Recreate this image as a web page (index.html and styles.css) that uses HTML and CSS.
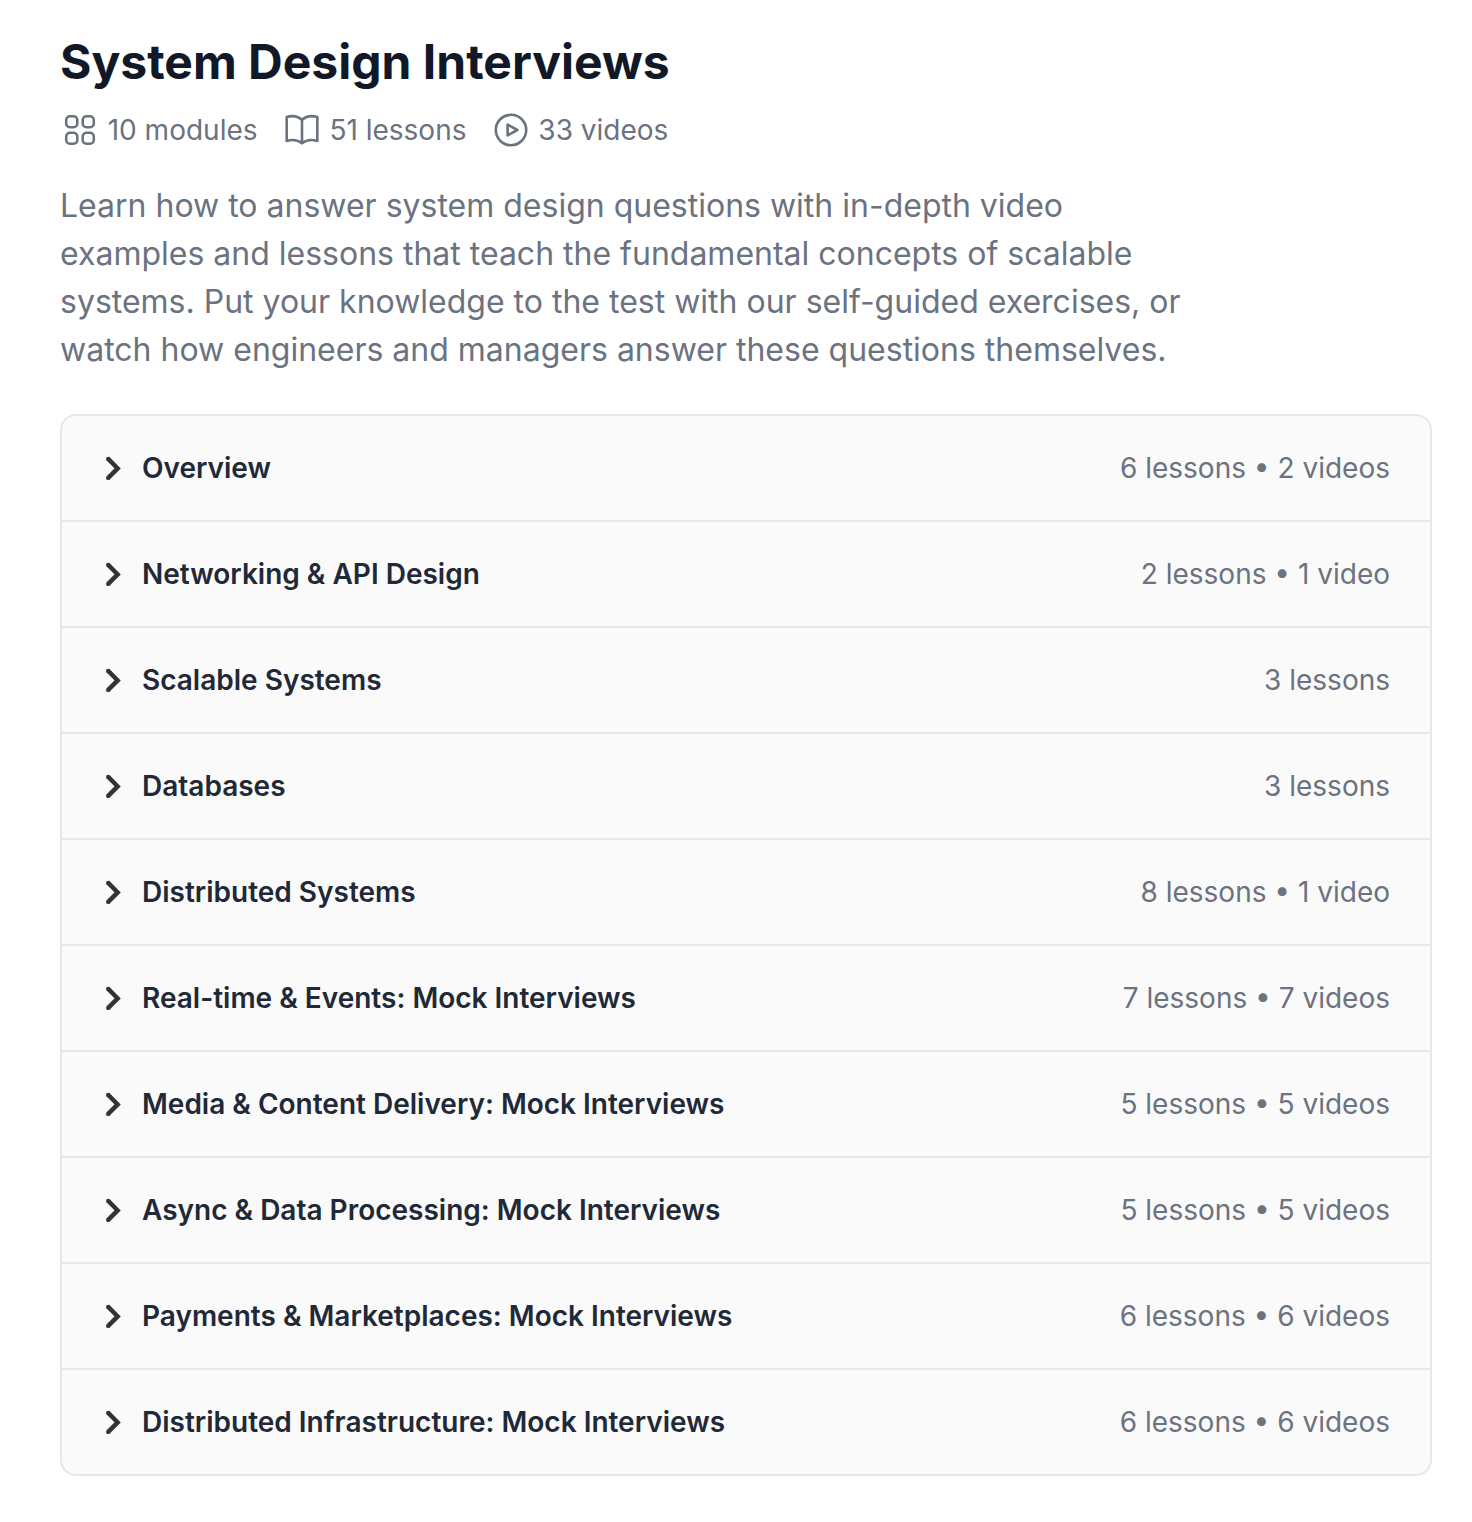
FILE: index.html
```html
<!DOCTYPE html>
<html lang="en">
<head>
<meta charset="UTF-8">
<meta name="viewport" content="width=device-width, initial-scale=1.0">
<title>System Design Interviews</title>
<link rel="stylesheet" href="styles.css">
</head>
<body>
<svg class="sprite" xmlns="http://www.w3.org/2000/svg">
  <symbol id="chevron" viewBox="0 0 20 26">
    <path d="M6.200 3.900L15.700 13.400L6.200 22.900" fill="none" stroke="currentColor" stroke-width="4.400"/>
    <circle cx="6.200" cy="3.900" r="2.200" fill="currentColor"/>
    <circle cx="6.200" cy="22.900" r="2.200" fill="currentColor"/>
  </symbol>
</svg>
<div class="course">
  <h1>System Design Interviews</h1>
  <div class="stats">
    <div class="stat">
      <svg class="icon" viewBox="0 0 40 40">
        <rect x="6.200" y="6.200" width="11.100" height="11.100" rx="3.800"/>
        <rect x="22.700" y="6.200" width="11.100" height="11.100" rx="3.800"/>
        <rect x="6.200" y="22.700" width="11.100" height="11.100" rx="3.800"/>
        <rect x="22.700" y="22.700" width="11.100" height="11.100" rx="3.800"/>
      </svg>
      <span>10 modules</span>
    </div>
    <div class="stat">
      <svg class="icon" viewBox="0 0 40 40">
        <path d="M20 9.800C16 6.300 10.500 5.300 4.700 7V31C10.500 29.300 16 30 20 33.300C24 30 29.500 29.300 35.300 31V7C29.500 5.300 24 6.300 20 9.800V33.300"/>
      </svg>
      <span>51 lessons</span>
    </div>
    <div class="stat">
      <svg class="icon" viewBox="0 0 40 40">
        <circle cx="20" cy="20" r="15.200"/>
        <path d="M16.600 14.600L26.300 20L16.600 25.400Z"/>
      </svg>
      <span>33 videos</span>
    </div>
  </div>
  <p class="description">Learn how to answer system design questions with in-depth video examples and lessons that teach the fundamental concepts of scalable systems. Put your knowledge to the test with our self-guided exercises, or watch how engineers and managers answer these questions themselves.</p>
  <div class="modules">
    <div class="module"><svg class="chevron"><use href="#chevron"/></svg><h2>Overview</h2><span class="count">6 lessons • 2 videos</span></div>
    <div class="module"><svg class="chevron"><use href="#chevron"/></svg><h2>Networking &amp; API Design</h2><span class="count">2 lessons • 1 video</span></div>
    <div class="module"><svg class="chevron"><use href="#chevron"/></svg><h2>Scalable Systems</h2><span class="count">3 lessons</span></div>
    <div class="module"><svg class="chevron"><use href="#chevron"/></svg><h2>Databases</h2><span class="count">3 lessons</span></div>
    <div class="module"><svg class="chevron"><use href="#chevron"/></svg><h2>Distributed Systems</h2><span class="count">8 lessons • 1 video</span></div>
    <div class="module"><svg class="chevron"><use href="#chevron"/></svg><h2>Real-time &amp; Events: Mock Interviews</h2><span class="count">7 lessons • 7 videos</span></div>
    <div class="module"><svg class="chevron"><use href="#chevron"/></svg><h2>Media &amp; Content Delivery: Mock Interviews</h2><span class="count">5 lessons • 5 videos</span></div>
    <div class="module"><svg class="chevron"><use href="#chevron"/></svg><h2>Async &amp; Data Processing: Mock Interviews</h2><span class="count">5 lessons • 5 videos</span></div>
    <div class="module"><svg class="chevron"><use href="#chevron"/></svg><h2>Payments &amp; Marketplaces: Mock Interviews</h2><span class="count">6 lessons • 6 videos</span></div>
    <div class="module"><svg class="chevron"><use href="#chevron"/></svg><h2>Distributed Infrastructure: Mock Interviews</h2><span class="count">6 lessons • 6 videos</span></div>
  </div>
</div>
</body>
</html>
```
FILE: styles.css
```css
* {
  box-sizing: border-box;
}

body {
  margin: 0;
  font-family: Inter, sans-serif;
  background-color: #fff;
  color: #6b7280;
}

.sprite {
  display: none;
}

.course {
  padding: 30px 40px 46px 60px;
}

h1 {
  margin: 0;
  font-size: 48px;
  line-height: 64px;
  font-weight: 700;
  color: #111827;
}

.stats {
  display: flex;
  gap: 24.2px;
  height: 40px;
  margin-top: 16px;
  font-size: 28px;
}

.stat {
  display: flex;
  align-items: center;
  gap: 7.7px;
}

.icon {
  width: 40px;
  height: 40px;
  fill: none;
  stroke: #6b7280;
  stroke-width: 2.6;
  stroke-linecap: round;
  stroke-linejoin: round;
}

.description {
  width: 1140px;
  margin: 32px 0 40px;
  font-size: 32px;
  line-height: 48px;
}

.modules {
  border: 2px solid #e5e7eb;
  border-radius: 16px;
  background-color: #fafafa;
  overflow: hidden;
}

.module {
  display: flex;
  align-items: center;
  height: 106px;
  padding: 0 40px;
  border-bottom: 2px solid #e5e7eb;
}

.module:last-child {
  height: 104px;
  border-bottom: none;
}

.chevron {
  width: 20px;
  height: 26px;
  margin-right: 20px;
  color: #333;
}

h2 {
  flex: 1;
  margin: 0;
  font-size: 28px;
  line-height: 40px;
  font-weight: 600;
  color: #1f2937;
}

.count {
  font-size: 28px;
  line-height: 40px;
}
```
